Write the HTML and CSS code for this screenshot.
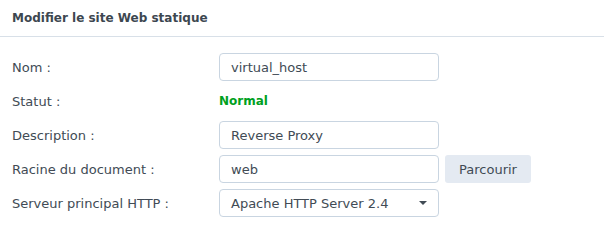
FILE: index.html
```html
<!DOCTYPE html>
<html lang="fr">
<head>
    <meta charset="UTF-8">
    <title>Modifier le site Web statique</title>
    <link rel="stylesheet" href="styles.css">
</head>
<body>
    <div class="dialog">
        <div class="header">Modifier le site Web statique</div>
        <div class="form">
            <label class="label">Nom :</label>
            <div class="field"><div class="input">virtual_host</div></div>

            <label class="label">Statut :</label>
            <div class="field"><span class="status">Normal</span></div>

            <label class="label">Description :</label>
            <div class="field"><div class="input">Reverse Proxy</div></div>

            <label class="label">Racine du document :</label>
            <div class="field">
                <div class="input">web</div>
                <button class="btn">Parcourir</button>
            </div>

            <label class="label">Serveur principal HTTP :</label>
            <div class="field">
                <div class="input select">
                    Apache HTTP Server 2.4
                    <svg class="caret" width="8" height="4" viewBox="0 0 8 4"><path d="M0 0h8L4 4z" fill="#414b55"/></svg>
                </div>
            </div>
        </div>
    </div>
</body>
</html>
```

FILE: styles.css
```css
body {
    margin: 0;
    background-color: #ffffff;
    font-family: 'DejaVu Sans', Verdana, sans-serif;
    font-size: 13px;
    color: #414b55;
}
.dialog {
    width: 604px;
}
.header {
    height: 37px;
    line-height: 36px;
    padding: 0 12px;
    font-weight: bold;
    font-size: 12px;
    color: #3d4750;
    border-bottom: 1px solid #d8e0e8;
    box-sizing: border-box;
}
.form {
    display: grid;
    grid-template-columns: 207px auto;
    grid-auto-rows: 28px;
    row-gap: 6px;
    padding: 16px 12px;
}
.label {
    display: flex;
    align-items: center;
}
.field {
    display: flex;
    align-items: center;
    gap: 6px;
}
.input {
    width: 220px;
    height: 28px;
    box-sizing: border-box;
    border: 1px solid #c9d5e1;
    border-radius: 4px;
    padding: 0 11px;
    display: flex;
    align-items: center;
    background-color: #ffffff;
}
.select {
    justify-content: space-between;
    padding-right: 11px;
}
.caret {
    display: block;
}
.status {
    color: #00a01e;
    font-weight: bold;
    font-size: 12px;
}
.btn {
    height: 28px;
    width: 86px;
    border: none;
    border-radius: 3px;
    background-color: #e4eaf2;
    color: #414b55;
    font-family: inherit;
    font-size: 13px;
    padding: 0;
}
```
